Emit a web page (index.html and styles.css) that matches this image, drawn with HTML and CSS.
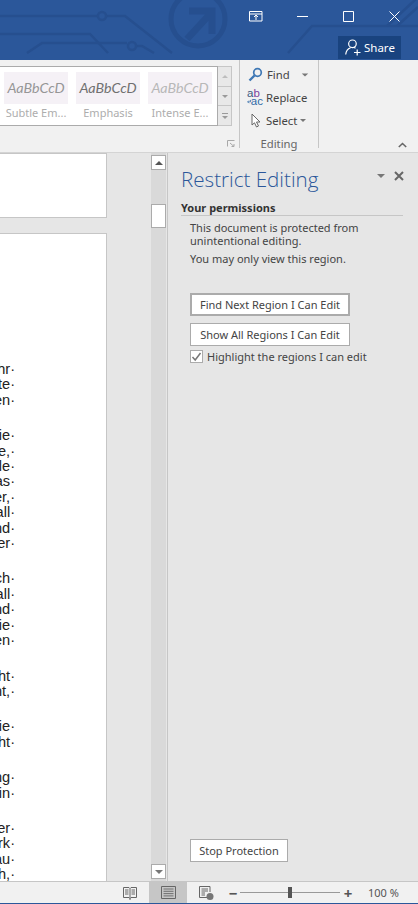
FILE: index.html
```html
<!DOCTYPE html>
<html lang="en">
<head>
    <meta charset="UTF-8">
    <title>Restrict Editing</title>
    <link rel="stylesheet" href="styles.css">
</head>
<body>
    <!-- Title bar -->
    <header class="titlebar">
        <svg class="circuit" width="418" height="60" viewBox="0 0 418 60">
            <g fill="none" stroke="#264f8f" stroke-width="2.5">
                <path d="M0 16H98M106 16H125L172 53"/>
                <circle cx="102" cy="16" r="4"/>
                <path d="M0 34H90L108 53"/>
                <path d="M27 53L42 43H127M137 46H142L154 53"/>
                <circle cx="132" cy="46" r="4"/>
                <path d="M288 53L312 26H418"/>
                <path d="M387 26L416 -1M397 26L418 7"/>
            </g>
            <g fill="none" stroke="#264f8f">
                <circle cx="198" cy="19" r="27" stroke-width="5"/>
                <path d="M187 39L211 13M189 11H212V34" stroke-width="7"/>
            </g>
        </svg>
        <div class="win-controls">
            <span class="win-btn">
                <svg width="14" height="11" viewBox="0 0 14 11"><path d="M.5.5H13V10H.5ZM.5 3H13M7 9V4.500M5 6L7 4L9 6" fill="none" stroke="#fff"/></svg>
            </span>
            <span class="win-btn">
                <svg width="11" height="11" viewBox="0 0 11 11"><path d="M0 5.500H11" stroke="#fff"/></svg>
            </span>
            <span class="win-btn">
                <svg width="11" height="11" viewBox="0 0 11 11"><path d="M.5.5H10.500V10.500H.5Z" fill="none" stroke="#fff"/></svg>
            </span>
            <span class="win-btn">
                <svg width="11" height="11" viewBox="0 0 11 11"><path d="M.5.5L10.500 10.500M10.500.5L.5 10.500" stroke="#fff"/></svg>
            </span>
        </div>
        <div class="share-row">
            <span class="share">
                <svg width="16" height="17" viewBox="0 0 16 17"><path d="M7.500 1A3.800 3.800 0 1 1 7.400 8.600A3.800 3.800 0 0 1 7.500 1ZM.7 15.500C1.200 11.500 3.500 9.500 5.500 8.800M9.500 8.800L10.500 9.300M9 13.500H15.500M12.200 10.500V16.500" fill="none" stroke="#fff" stroke-width="1.200"/></svg>
                Share
            </span>
        </div>
    </header>

    <!-- Ribbon -->
    <section class="ribbon">
        <div class="styles-group">
            <div class="gallery">
                <div class="gallery-items">
                    <div class="style-item"><div class="swatch">AaBbCcD</div><div class="style-name">Subtle Em...</div></div>
                    <div class="style-item"><div class="swatch dark">AaBbCcD</div><div class="style-name">Emphasis</div></div>
                    <div class="style-item"><div class="swatch light">AaBbCcD</div><div class="style-name">Intense E...</div></div>
                </div>
                <div class="gallery-scroll">
                    <span class="scroll-cell"><i class="tri up faint"></i></span>
                    <span class="scroll-cell"><i class="tri"></i></span>
                    <span class="scroll-cell more"><i class="tri"></i></span>
                </div>
            </div>
            <svg class="launcher" width="8" height="7" viewBox="0 0 8 7"><path d="M.5 6.500V.5H7.500M3 3L7 6.500M7 4V6.500H4.500" fill="none" stroke="#a8a8a8"/></svg>
        </div>
        <div class="editing-group">
            <div class="edit-row">
                <svg class="edit-icon" width="15" height="15" viewBox="0 0 15 15"><circle cx="9.500" cy="5.500" r="3.800" fill="none" stroke="#3f78b5" stroke-width="1.700"/><path d="M6.500 8.500L1.500 13.500" stroke="#3f78b5" stroke-width="2.400"/></svg>
                <span>Find</span><i class="tri find-caret"></i>
            </div>
            <div class="edit-row">
                <span class="replace-icon"><b class="ab">a<u>b</u></b><b class="ac"><svg width="5" height="5" viewBox="0 0 5 5"><path d="M4.500.5V3H1M2.500 1.300L.8 3L2.500 4.700" fill="none" stroke="#2f6aa8"/></svg>ac</b></span>
                <span>Replace</span>
            </div>
            <div class="edit-row select-row">
                <svg class="edit-icon" width="10" height="15" viewBox="0 0 10 15"><path d="M1 1V12L3.500 9.800L5.500 14L7.500 13L5.500 9H9Z" fill="#fff" stroke="#666"/></svg>
                <span>Select</span><i class="tri small"></i>
            </div>
            <div class="group-label">Editing</div>
        </div>
        <div class="ribbon-rest">
            <svg width="9" height="6" viewBox="0 0 9 6"><path d="M.8 5L4.500 1.500L8.200 5" fill="none" stroke="#666" stroke-width="1.600"/></svg>
        </div>
    </section>

    <!-- Document and task pane -->
    <main class="workspace">
        <div class="doc-area">
            <div class="page page-top"></div>
            <div class="page page-body">
                <p>hr·<br>te·<br>en·</p>
                <p>ie·<br>e,·<br>le·<br>as·<br>er,·<br>all·<br>nd·<br>er·</p>
                <p>ch·<br>all·<br>nd·<br>ie·<br>en·</p>
                <p>ht·<br>nt,·</p>
                <p>ie·<br>ht·</p>
                <p>ng·<br>in·</p>
                <p>er·<br>rk·<br>au·<br>h,·</p>
            </div>
        </div>
        <div class="doc-scroll">
            <span class="doc-scroll-btn"><i class="tri up"></i></span>
            <span class="doc-thumb"></span>
            <span class="doc-scroll-btn bottom"><i class="tri"></i></span>
        </div>
        <aside class="pane">
            <div class="pane-head">
                <h1>Restrict Editing</h1>
                <i class="tri pane-caret"></i>
                <svg class="pane-close" width="10" height="10" viewBox="0 0 10 10"><path d="M1 1L9 9M9 1L1 9" stroke="#666" stroke-width="2"/></svg>
            </div>
            <h2>Your permissions</h2>
            <div class="pane-body">
                <p class="info">This document is protected from<br>unintentional editing.</p>
                <p class="info">You may only view this region.</p>
                <button class="btn btn-default">Find Next Region I Can Edit</button>
                <button class="btn">Show All Regions I Can Edit</button>
                <label class="check">
                    <span class="box"><svg width="11" height="10" viewBox="0 0 11 10"><path d="M1.500 5L4.200 8L9.500 1" fill="none" stroke="#777" stroke-width="1.500"/></svg></span>
                    Highlight the regions I can edit
                </label>
                <button class="btn btn-stop">Stop Protection</button>
            </div>
        </aside>
    </main>

    <!-- Status bar -->
    <footer class="statusbar">
        <svg class="view-read" width="14" height="14" viewBox="0 0 14 14"><path d="M.5 1.500H6L7 2.500L8 1.500H13.500V11.500H8L7 12.500L6 11.500H.5ZM7 2.500V14M2 4H5.500M2 6H5.500M2 8H5.500M8.500 4H12M8.500 6H12M8.500 8H12" fill="none" stroke="#666"/></svg>
        <span class="view-print">
            <svg width="15" height="13" viewBox="0 0 15 13"><path d="M.5.5H14.500V12.500H.5Z" fill="none" stroke="#666"/><path d="M2.500 3H12.500M2.500 5.300H12.500M2.500 7.600H12.500M2.500 9.900H12.500" fill="none" stroke="#666" stroke-width=".9"/></svg>
        </span>
        <svg class="view-web" width="15" height="14" viewBox="0 0 15 14"><path d="M8 11.500H.5V.5H11V6M2.500 3H9M2.500 5H9M2.500 7H6M2.500 9H6" fill="none" stroke="#666"/><circle cx="11" cy="10.500" r="3.500" fill="#777"/></svg>
        <div class="zoom">
            <span class="zoom-sign">−</span>
            <span class="zoom-track"><span class="zoom-thumb"></span></span>
            <span class="zoom-sign">+</span>
        </div>
        <span class="zoom-value">100 %</span>
    </footer>
</body>
</html>
```

FILE: styles.css
```css
* {
    box-sizing: border-box;
}
body {
    margin: 0;
    width: 418px;
    height: 904px;
    overflow: hidden;
    display: flex;
    flex-direction: column;
    background-color: #f1f1f1;
    font-family: "Noto Sans", Arial, sans-serif;
    font-size: 11px;
    color: #444;
}

/* Shared little triangle */
.tri {
    display: inline-block;
    width: 0;
    height: 0;
    border-left: 4px solid transparent;
    border-right: 4px solid transparent;
    border-top: 4px solid #777;
}
.tri.up {
    border-top: 0;
    border-bottom: 4px solid #555;
}
.tri.small {
    border-left-width: 3px;
    border-right-width: 3px;
    border-top-width: 3px;
}

/* Title bar */
.titlebar {
    position: relative;
    flex: 0 0 60px;
    background-color: #2b579a;
    overflow: hidden;
}
.circuit {
    position: absolute;
    left: 0;
    top: 0;
}
.win-controls {
    position: relative;
    display: flex;
    justify-content: flex-end;
    height: 32px;
    padding-right: 1px;
}
.win-btn {
    width: 46px;
    display: flex;
    align-items: center;
    justify-content: center;
}
.share-row {
    position: relative;
    display: flex;
    justify-content: flex-end;
    padding: 4px 17px 0 0;
}
.share {
    width: 63px;
    height: 23px;
    display: flex;
    align-items: center;
    gap: 3px;
    padding-left: 7px;
    background-color: #19437f;
    color: #fff;
    font-size: 11.500px;
}

/* Ribbon */
.ribbon {
    flex: 0 0 93px;
    min-height: 0;
    display: flex;
    align-items: flex-start;
    border-bottom: 1px solid #d4d4d4;
    background-color: #f1f1f1;
}
.styles-group {
    position: relative;
    width: 240px;
    height: 88px;
    padding-top: 6px;
    border-right: 1px solid #c6c6c6;
}
.gallery {
    display: flex;
    height: 60px;
    margin-left: -1px;
}
.gallery-items {
    width: 219px;
    display: flex;
    gap: 8px;
    padding: 5px 0 0 4px;
    background-color: #fff;
    border: 1px solid #ababab;
}
.style-item {
    width: 64px;
}
.swatch {
    height: 32px;
    line-height: 32px;
    text-align: center;
    background-color: #f5f1f6;
    font-family: Lato, Arial, sans-serif;
    font-style: italic;
    font-size: 14.300px;
    color: #969696;
}
.swatch.dark {
    color: #707070;
}
.swatch.light {
    color: #b8b8b8;
}
.style-name {
    text-align: center;
    white-space: nowrap;
    font-size: 11px;
    line-height: 18px;
    color: #adadad;
}
.gallery-scroll {
    width: 14px;
    display: flex;
    flex-direction: column;
    background-color: #e8e8e8;
    border: 1px solid #c6c6c6;
    border-left: 0;
}
.scroll-cell {
    flex: 1;
    display: flex;
    align-items: center;
    justify-content: center;
    border-bottom: 1px solid #c6c6c6;
}
.scroll-cell:last-child {
    border-bottom: 0;
}
.scroll-cell .tri {
    border-left-width: 3px;
    border-right-width: 3px;
    border-top: 3px solid #9a9a9a;
}
.scroll-cell .tri.up {
    border-top: 0;
    border-bottom: 3px solid #bdbdbd;
}
.scroll-cell.more .tri {
    position: relative;
    margin-top: 4px;
}
.scroll-cell.more .tri::before {
    content: "";
    position: absolute;
    left: -3px;
    top: -6px;
    width: 6px;
    height: 1px;
    background-color: #9a9a9a;
}
.launcher {
    position: absolute;
    right: 4px;
    bottom: 1px;
}
.editing-group {
    width: 79px;
    height: 88px;
    border-right: 1px solid #c6c6c6;
    display: flex;
    flex-direction: column;
    font-size: 11.300px;
    color: #444;
}
.edit-row {
    height: 23px;
    flex: none;
    display: flex;
    align-items: center;
    gap: 4px;
    padding-left: 8px;
}
.edit-row:first-child {
    margin-top: 3px;
}
.find-caret {
    margin-left: 7px;
    transform: scale(.8);
}
.select-row {
    padding-left: 11px;
    gap: 5px;
}
.select-row .tri {
    margin-left: -2px;
}
.replace-icon {
    width: 16px;
    margin: -1px -1px 0 -1px;
    display: flex;
    flex-direction: column;
    font-family: "Liberation Sans", Arial, sans-serif;
    font-size: 11.500px;
    line-height: 8px;
}
.replace-icon b {
    font-weight: normal;
}
.replace-icon .ab {
    color: #3d5a80;
}
.replace-icon u {
    text-decoration: none;
    color: #7b3f9e;
}
.replace-icon .ac {
    display: flex;
    align-items: center;
    color: #2f6aa8;
    white-space: nowrap;
}
.group-label {
    margin-top: 4px;
    text-align: center;
    color: #666;
    line-height: 16px;
}
.ribbon-rest {
    flex: 1;
    align-self: stretch;
    display: flex;
    align-items: flex-end;
    justify-content: flex-end;
    padding: 0 11px 4px 0;
}

/* Document */
.workspace {
    flex: 1;
    display: flex;
    min-height: 0;
    background-color: #e6e6e6;
}
.doc-area {
    width: 107px;
    overflow: hidden;
}
.page {
    background-color: #fff;
    border: 1px solid #c6c6c6;
    border-left: 0;
}
.page-top {
    height: 65px;
    margin-bottom: 15px;
}
.page-body {
    height: 660px;
    padding-top: 128px;
}
/* the page is cut by the window, only the line ends show */
.page-body p {
    width: 45px;
    margin: 0 0 20px -30px;
    text-align: right;
    white-space: nowrap;
    font-family: "Liberation Sans", Arial, sans-serif;
    font-size: 14.600px;
    line-height: 15.400px;
    color: #222;
}
.doc-scroll {
    margin-left: 44px;
    background-color: #d9d9d9;
    flex: 0 0 16px;
    border-right: 1px solid #e6e6e6;
    display: flex;
    flex-direction: column;
    align-items: flex-start;
    padding-top: 2px;
}
.doc-scroll-btn {
    width: 15px;
    height: 15px;
    background-color: #fff;
    border: 1px solid #ababab;
    display: flex;
    align-items: center;
    justify-content: center;
}
.doc-scroll-btn.bottom {
    margin-top: auto;
    margin-bottom: 2px;
}
.doc-thumb {
    width: 15px;
    height: 24px;
    margin-top: 34px;
    background-color: #fff;
    border: 1px solid #ababab;
}

/* Task pane */
.pane {
    flex: 1;
    display: flex;
    flex-direction: column;
    border-left: 1px solid #c6c6c6;
    padding: 11px 14px 19px 13px;
}
.pane-head {
    display: flex;
    align-items: center;
    height: 30px;
}
.pane-head h1 {
    margin: 0;
    flex: 1;
    font-family: "Open Sans", Arial, sans-serif;
    font-weight: 300;
    font-size: 20.600px;
    color: #2b579a;
}
.pane-caret {
    margin: 0 9px 6px 0;
}
.pane-close {
    margin-bottom: 6px;
}
.pane h2 {
    margin: 6px 1px 0 0;
    font-size: 11px;
    font-weight: 700;
    line-height: 16px;
    height: 16px;
    color: #333;
    border-bottom: 1px solid #c6c6c6;
}
.pane-body {
    flex: 1;
    display: flex;
    flex-direction: column;
    align-items: flex-start;
    padding: 5px 0 0 9px;
}
.info {
    margin: 0 0 5px;
    line-height: 13px;
}
.btn {
    height: 23px;
    width: 160px;
    padding: 0;
    background-color: #fff;
    border: 1px solid #ababab;
    font-family: inherit;
    font-size: 11px;
    color: #444;
}
.btn-default {
    border-width: 2px;
    margin-top: 23px;
    margin-bottom: 7px;
}
.check {
    display: flex;
    align-items: center;
    gap: 4px;
    margin-top: 3px;
}
.box {
    width: 13px;
    height: 13px;
    background-color: #fff;
    border: 1px solid #ababab;
    display: flex;
    align-items: center;
    justify-content: center;
}
.btn-stop {
    width: 98px;
    margin-top: auto;
}

/* Status bar */
.statusbar {
    flex: 0 0 23px;
    display: flex;
    align-items: center;
    border-top: 1px solid #c6c6c6;
    border-bottom: 1px solid #2b579a;
    background-color: #f1f1f1;
    padding-left: 123px;
}
.view-print {
    width: 38px;
    height: 100%;
    margin-left: 12px;
    background-color: #c6c6c6;
    display: flex;
    align-items: center;
    justify-content: center;
}
.view-web {
    margin-left: 12px;
}
.zoom {
    display: flex;
    align-items: center;
    margin-left: 13px;
    color: #555;
}
.zoom-sign {
    width: 12px;
    text-align: center;
    font-size: 15px;
    font-weight: 700;
    line-height: 14px;
}
.zoom-track {
    position: relative;
    width: 100px;
    height: 1px;
    margin: 0 2px 0 1px;
    background-color: #999;
}
.zoom-thumb {
    position: absolute;
    left: 48px;
    top: -5px;
    width: 4px;
    height: 11px;
    background-color: #555;
}
.zoom-value {
    margin-left: 14px;
    font-size: 11px;
    color: #555;
}
```
